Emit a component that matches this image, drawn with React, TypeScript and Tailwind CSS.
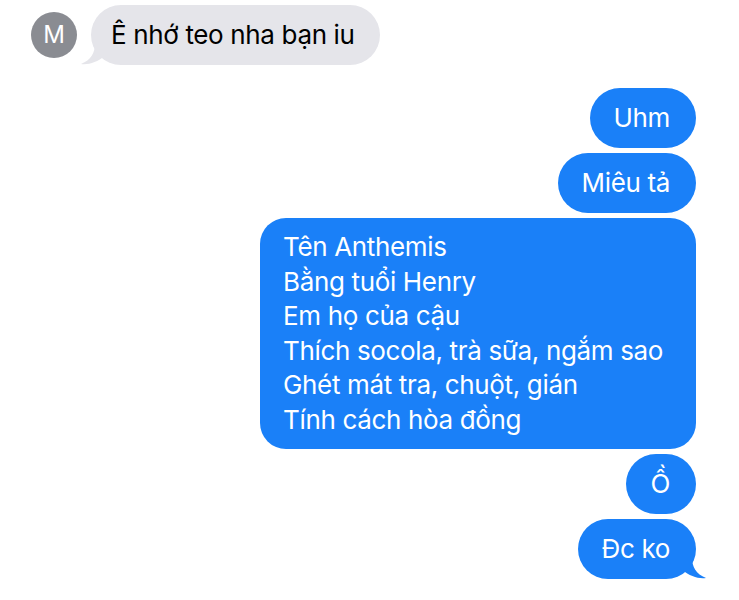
import React from "react";

const font = { fontFamily: "Inter, 'Noto Sans', sans-serif" };

function LeftTail() {
  return (
    <svg
      className="absolute bottom-0 left-[-10px]"
      width="24"
      height="22"
      viewBox="0 0 24 22"
    >
      <path d="M14 0 C14 10 10 17 0 21 C8 22 16 19 24 13 L24 0 Z" fill="#e5e5ea" />
    </svg>
  );
}

function RightTail() {
  return (
    <svg
      className="absolute bottom-0 right-[-10px]"
      width="24"
      height="22"
      viewBox="0 0 24 22"
    >
      <path d="M10 0 C10 10 14 17 24 21 C16 22 8 19 0 13 L0 0 Z" fill="#1a80f8" />
    </svg>
  );
}

function Sent({ children, tail }: { children: React.ReactNode; tail?: boolean }) {
  return (
    <div className="relative rounded-[30px] bg-[#1a80f8] py-[13px] pl-6 pr-[26px] text-[26px] leading-[34px] tracking-[-0.35px] text-white">
      {children}
      {tail && <RightTail />}
    </div>
  );
}

export default function App() {
  const lines = [
    "Tên Anthemis",
    "Bằng tuổi Henry",
    "Em họ của cậu",
    "Thích socola, trà sữa, ngắm sao",
    "Ghét mát tra, chuột, gián",
    "Tính cách hòa đồng",
  ];

  return (
    <main className="h-[600px] w-[739px] overflow-hidden bg-white" style={font}>
      <div className="flex items-center gap-[14px] pl-[31px] pt-[5px]">
        <div className="flex h-[46px] w-[46px] items-center justify-center rounded-full bg-[#8a8c92] text-[24px] text-white">
          M
        </div>
        <div className="relative rounded-[30px] bg-[#e5e5ea] py-[13px] pl-5 pr-[25px] text-[26px] leading-[34px] tracking-[-0.35px] text-black">
          Ê nhớ teo nha bạn iu
          <LeftTail />
        </div>
      </div>

      <div className="mt-[23px] flex flex-col items-end gap-[5px] pr-[43px]">
        <Sent>Uhm</Sent>
        <Sent>Miêu tả</Sent>
        <div className="rounded-[26px] bg-[#1a80f8] py-3 pl-[23px] pr-[33px] text-[26px] leading-[34.5px] tracking-[-0.35px] text-white">
          {lines.map((l) => (
            <div key={l}>{l}</div>
          ))}
        </div>
        <Sent>Ồ</Sent>
        <Sent tail>Đc ko</Sent>
      </div>
    </main>
  );
}
